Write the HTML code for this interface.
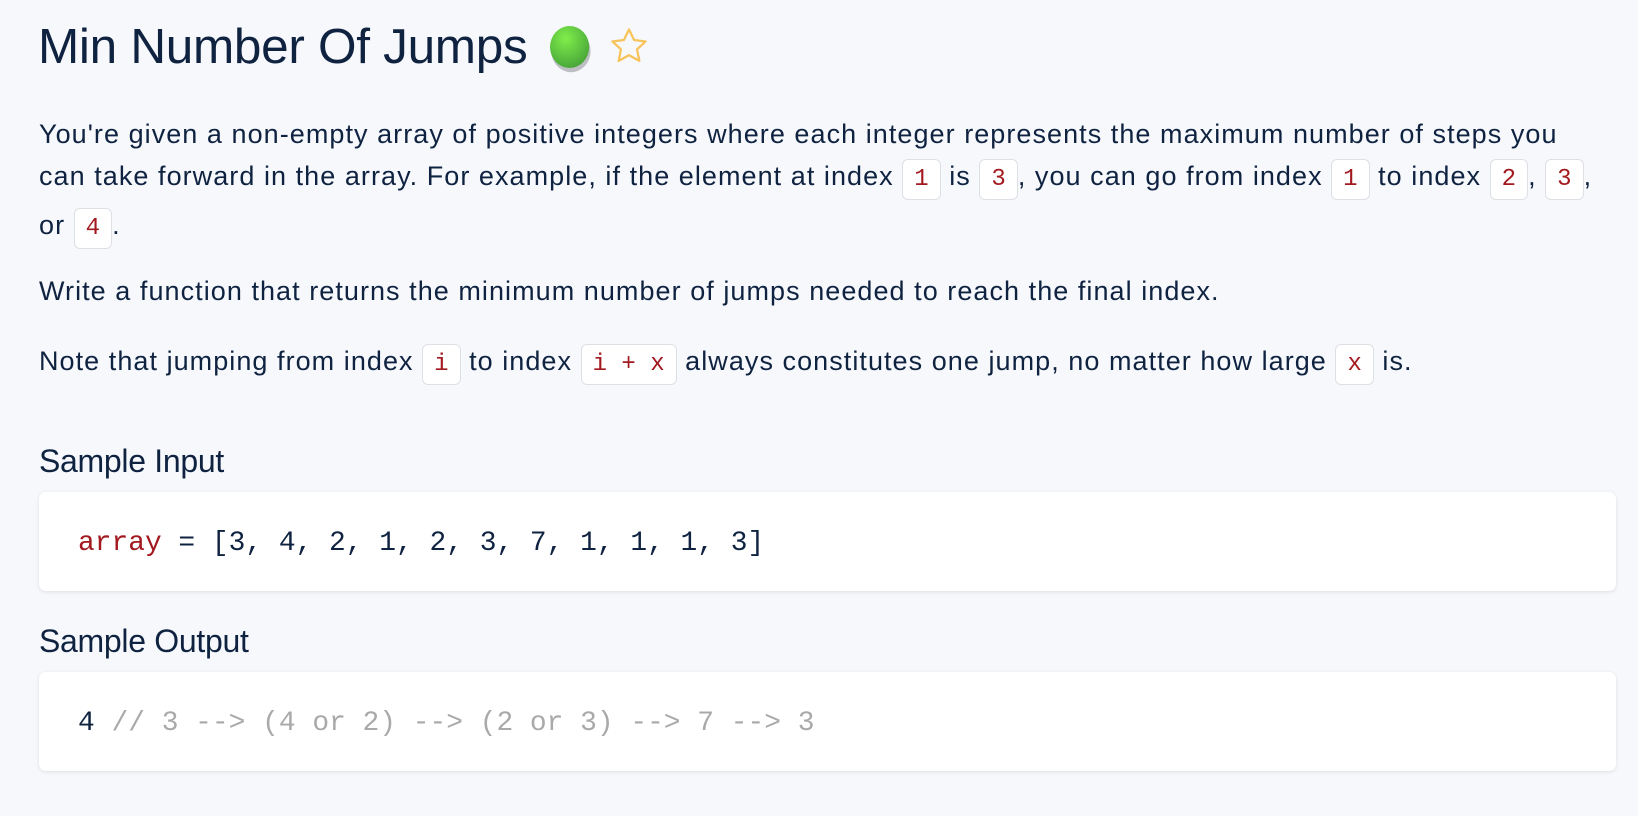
<!DOCTYPE html>
<html><head><meta charset="utf-8"><style>
html,body{margin:0;padding:0}
body{width:1638px;height:816px;background:#f6f8fc;font-family:"Liberation Sans",sans-serif;color:#0f2341;position:relative;overflow:hidden}
.l{position:absolute;left:39px;white-space:nowrap;font-size:27px;line-height:40px;letter-spacing:1.05px}
code{font-family:"Liberation Mono",monospace;color:#a2191f;background:#fff;border:1px solid #dcdfe4;border-radius:6px;padding:6px 11px;font-size:24px;letter-spacing:0}
h1{position:absolute;left:38px;top:19px;margin:0;font-weight:normal;font-size:49.5px;line-height:56px;letter-spacing:-0.3px;white-space:nowrap}
h2{position:absolute;left:39px;margin:0;font-weight:normal;font-size:32px;line-height:38px;letter-spacing:-0.3px}
.card{position:absolute;left:39px;width:1577px;height:99px;background:#fff;border-radius:7px;box-shadow:0 1px 4px rgba(0,0,0,0.1)}
.mono{position:absolute;left:39px;top:36px;font-family:"Liberation Mono",monospace;font-size:27.9px;line-height:32px;white-space:pre}
</style></head><body>
<h1>Min Number Of Jumps
<svg width="56" height="56" viewBox="0 0 40 40" style="vertical-align:-12px;margin-left:2px"><defs><radialGradient id="g" cx="0.4" cy="0.3" r="0.7"><stop offset="0" stop-color="#7fee4a"/><stop offset="1" stop-color="#4aa83a"/></radialGradient></defs><ellipse cx="20" cy="23" rx="14" ry="15" fill="#555" opacity="0.35"/><ellipse cx="19" cy="20" rx="14" ry="15" fill="url(#g)"/></svg>
<svg width="42" height="42" viewBox="0 0 24 24" style="vertical-align:-4px;margin-left:-4px"><path d="M12 2.5l2.9 6.1 6.6.8-4.9 4.5 1.3 6.6L12 17.2l-5.9 3.3 1.3-6.6L2.5 9.4l6.6-.8z" fill="none" stroke="#f7c35a" stroke-width="1.3" stroke-linejoin="round"/></svg></h1>
<div class="l" style="top:114px">You're given a non-empty array of positive integers where each integer represents the maximum number of steps you</div>
<div class="l" style="top:156px">can take forward in the array. For example, if the element at index <code>1</code> is <code>3</code>, you can go from index <code>1</code> to index <code>2</code>, <code>3</code>,</div>
<div class="l" style="top:205px">or <code>4</code>.</div>
<div class="l" style="top:271px">Write a function that returns the minimum number of jumps needed to reach the final index.</div>
<div class="l" style="top:341px">Note that jumping from index <code>i</code> to index <code>i + x</code> always constitutes one jump, no matter how large <code>x</code> is.</div>
<h2 style="top:442px">Sample Input</h2>
<div class="card" style="top:492px"><div class="mono"><span style="color:#a2191f">array</span> = [3, 4, 2, 1, 2, 3, 7, 1, 1, 1, 3]</div></div>
<h2 style="top:622px">Sample Output</h2>
<div class="card" style="top:672px"><div class="mono">4 <span style="color:#a9a9a9">// 3 --&gt; (4 or 2) --&gt; (2 or 3) --&gt; 7 --&gt; 3</span></div></div>
</body></html>
